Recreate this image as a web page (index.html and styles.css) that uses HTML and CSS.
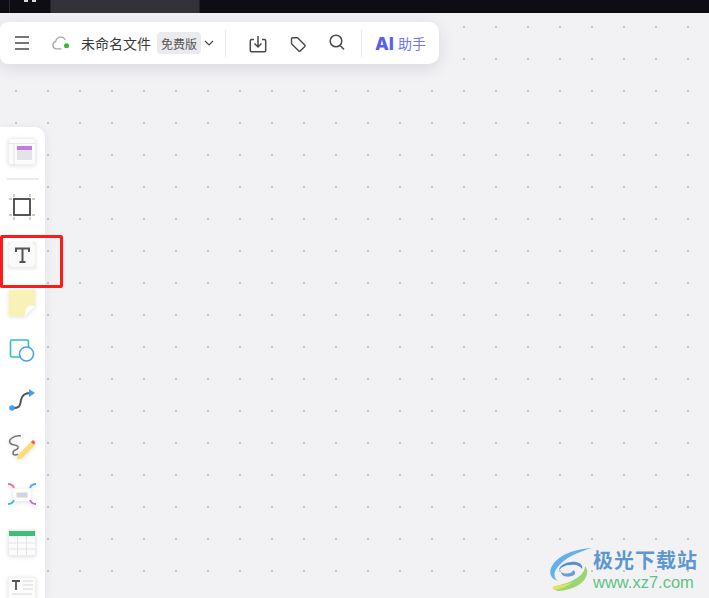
FILE: index.html
```html
<!DOCTYPE html>
<html lang="zh">
<head>
<meta charset="utf-8">
<title>未命名文件</title>
<link rel="stylesheet" href="styles.css">
</head>
<body>
<div class="titlebar">
  <div class="win-btn"><svg width="12" height="2" viewBox="0 0 12 2"><path d="M0 0h4v2H0zM8 0h4v2H8z" fill="#d8d8da"/></svg></div>
  <div class="tab"></div>
</div>
<div class="canvas">
  <div class="topbar">
    <svg class="ic-menu" width="16" height="14" viewBox="0 0 16 14"><path d="M1 1h14M1 7h14M1 13h14" stroke="#4a4a4a" stroke-width="1.300" fill="none"/></svg>
    <svg class="ic-cloud" width="18" height="14" viewBox="0 0 18 14"><path d="M9.500 12.800H4.500a3.600 3.600 0 0 1-.8-7.100A5.200 5.200 0 0 1 13.300 3.600" fill="none" stroke="#a6a6a6" stroke-width="1.300"/><circle cx="14.500" cy="9.800" r="2.500" fill="#36b82f"/></svg>
    <span class="filename">未命名文件</span>
    <span class="badge">免费版</span>
    <svg class="ic-chev" width="10" height="6" viewBox="0 0 10 6"><path d="M1 1l4 4 4-4" fill="none" stroke="#444" stroke-width="1.200"/></svg>
    <span class="sep sep-a"></span>
    <svg class="ic-save" width="18" height="18" viewBox="0 0 18 18"><path d="M5 4.500H2.500A1.200 1.200 0 0 0 1.300 5.700v9.800a1.200 1.200 0 0 0 1.200 1.200h13a1.200 1.200 0 0 0 1.200-1.200V5.700a1.200 1.200 0 0 0-1.200-1.200H13M9 1v10.500M5.500 8.500L9 12l3.500-3.500" fill="none" stroke="#4a4a4a" stroke-width="1.500"/></svg>
    <svg class="ic-tag" width="17" height="17" viewBox="0 0 17 17"><path d="M1.500 3v4.300a1 1 0 0 0 .3.700l7 7a1 1 0 0 0 1.400 0l4.600-4.600a1 1 0 0 0 0-1.400l-7-7a1 1 0 0 0-.7-.3H2.800A1.300 1.300 0 0 0 1.500 3z" fill="none" stroke="#4a4a4a" stroke-width="1.400"/></svg>
    <svg class="ic-search" width="16" height="17" viewBox="0 0 16 17"><circle cx="7" cy="7" r="5.800" fill="none" stroke="#4a4a4a" stroke-width="1.500"/><path d="M11.200 11.400L15 15.500" stroke="#4a4a4a" stroke-width="1.500"/></svg>
    <span class="sep sep-b"></span>
    <span class="ai">AI</span>
    <span class="ai-label">助手</span>
  </div>

  <div class="toolbar">
    <div class="tool tool-first">
      <svg class="soft" width="30" height="30" viewBox="0 0 30 30"><rect x="1.500" y="1.500" width="27" height="26" rx="2" fill="#fbfbfc" stroke="#efeff1"/><path d="M1.500 6.500h27M7 6.500v21" stroke="#e8e8ec"/><rect x="10" y="9" width="15" height="4" fill="#c679e3"/><rect x="10" y="13" width="15" height="10" fill="#e3e4e9"/></svg>
    </div>
    <div class="divider"></div>
    <div class="tool">
      <svg width="26" height="26" viewBox="0 0 26 26"><rect x="5" y="5" width="16" height="16" fill="#fff" stroke="#444" stroke-width="1.800"/><path d="M5 0v3M21 0v3M5 23v3M21 23v3M0 5h3M0 21h3M23 5h3M23 21h3" stroke="#b5b9bd" stroke-width="1.400"/></svg>
    </div>
    <div class="tool">
      <svg class="soft" width="30" height="28" viewBox="0 0 30 28"><rect x="2" y="2" width="26" height="24" fill="#fafafa"/><path d="M1 1h3v3H1zM26 1h3v3h-3zM1 24h3v3H1zM26 24h3v3h-3z" fill="#f0f0f1"/><path d="M9 11V7.500h13V11M15.500 7.500v13.500M12.500 21h6" fill="none" stroke="#555" stroke-width="2"/></svg>
    </div>
    <div class="tool">
      <svg class="soft" width="30" height="30" viewBox="0 0 30 30"><path d="M2 2h26v16L18 28H2z" fill="#f9f2b6"/><path d="M18 28c0-3 .5-8 3-9.500 2-.8 5-.5 7-.5z" fill="#fff"/></svg>
    </div>
    <div class="tool">
      <svg width="26" height="24" viewBox="0 0 26 24"><rect x="1.500" y="1" width="18" height="17" rx="1.500" fill="#fff" stroke="#2fc0b6" stroke-width="1.600"/><circle cx="17.500" cy="15" r="7" fill="#fff" stroke="#4c9ff0" stroke-width="1.600"/></svg>
    </div>
    <div class="tool">
      <svg width="28" height="26" viewBox="0 0 28 26"><path d="M4 22c9 0 8-3 9-8 1-5 4-7 9-7" fill="none" stroke="#555" stroke-width="2"/><circle cx="4" cy="22" r="2.800" fill="#459df5"/><path d="M21 3l6 4-6 4z" fill="#459df5"/></svg>
    </div>
    <div class="tool">
      <svg class="soft" width="30" height="28" viewBox="0 0 30 28"><path d="M14 3C8 2 1 6 3 10c2 3 9 1 8 5-1 3-5 1-5 5 0 3 4 2 5 1" fill="none" stroke="#777" stroke-width="1.600"/><path d="M11 22l14-14 3.500 3.500-14 14-4.500 1z" fill="#fbdc72"/><path d="M24 9l2-2 2.500 2.500-2 2z" fill="#f05a5a"/></svg>
    </div>
    <div class="tool">
      <svg class="soft" width="30" height="24" viewBox="0 0 30 24"><rect x="6" y="6" width="18" height="12" rx="1" fill="#fff"/><rect x="9.500" y="9.500" width="11" height="5" fill="#d4d5da"/><path d="M1 1c3 0 5 1 6 4" fill="none" stroke="#ef6fa6" stroke-width="1.800"/><path d="M29 1c-3 0-5 1-6 4" fill="none" stroke="#5ca8f2" stroke-width="1.800"/><path d="M1 21c3 0 5-1 6-4" fill="none" stroke="#35c2b8" stroke-width="1.800"/><path d="M29 21c-3 0-5-1-6-4" fill="none" stroke="#b76ee8" stroke-width="1.800"/></svg>
    </div>
    <div class="tool">
      <svg class="soft" width="28" height="26" viewBox="0 0 28 26"><rect x="0.500" y="0.500" width="27" height="25" rx="1.500" fill="#fbfbfb" stroke="#ececee"/><path d="M1 1h26v5H1z" fill="#43bb7c"/><path d="M1 13h26M1 19h26M9.500 6v19M18.500 6v19" stroke="#e4e4e6"/></svg>
    </div>
    <div class="tool tool-last">
      <svg class="soft" width="28" height="28" viewBox="0 0 28 28"><rect x="0.500" y="0.500" width="27" height="27" fill="#fcfcfc" stroke="#f1f1f2"/><path d="M4 4h8M8 4v9" stroke="#555" stroke-width="1.800"/><path d="M15 4h10M15 8h10M15 12h10M4 17h20M4 22h14" stroke="#e2e2e4" stroke-width="1.400"/></svg>
    </div>
  </div>

  <div class="marker"></div>

  <div class="watermark">
    <svg class="wm-logo" width="44" height="46" viewBox="0 0 44 46">
      <path d="M43 1C27 2 10 7 3 19c-4 7-1 13 6 15-4-3-5-8-1-13C15 11 29 5 43 1z" fill="#63b1ea"/>
      <path d="M10 23c1-6 10-9 17-8 5 1 7 4 6 7-2-3-6-5-11-4-6 0-9 2-12 5z" fill="#5b8fc9"/>
      <path d="M12 25c0 5 8 6 13 3 2-2 1-4-1-5 0 3-7 5-12 2z" fill="#6b9ed4"/>
      <path d="M9 44c14-1 27-7 29-17 1-4-1-7-2-8 0 9-11 16-29 20-3 2-2 4 2 5z" fill="#9ad670"/>
      <path d="M5 43c7-1 14-4 19-8-5 2-12 3-19 4-2 1-2 3 0 4z" fill="#e5e25e"/>
    </svg>
    <div class="wm-text">
      <div class="wm-cn">极光下载站</div>
      <div class="wm-url">www.xz7.com</div>
    </div>
  </div>
</div>
</body>
</html>
```
FILE: styles.css
```css
* { box-sizing: border-box; }
html, body { margin: 0; height: 100%; overflow: hidden; }
body {
  width: 709px;
  height: 598px;
  font-family: "Noto Sans CJK SC", "Liberation Sans", sans-serif;
  display: flex;
  flex-direction: column;
  background: #f2f2f5;
}
.titlebar {
  height: 13px;
  flex: none;
  background: #0f0d14;
  display: flex;
  padding-left: 9px;
}
.win-btn {
  width: 41px;
  border-left: 1px solid #2a2a2e;
  display: flex;
  justify-content: center;
  padding-right: 1px;
}
.win-btn svg { display: block; }
.tab { width: 150px; background: #333238; border-left: 1px solid #222; border-right: 1px solid #222; }
.canvas {
  position: relative;
  flex: 1;
  background-color: #f2f2f5;
  background-image: radial-gradient(circle at 1px 1px, #c6c7ca 1.300px, transparent 1.300px);
  background-size: 32px 32px;
  background-position: 15px 13px;
}
.topbar {
  position: absolute;
  left: 0;
  top: 9px;
  width: 439px;
  height: 42px;
  background: #fff;
  border-radius: 8px 10px 10px 8px;
  box-shadow: 0 4px 16px rgba(40, 40, 60, 0.12);
  display: flex;
  align-items: center;
  padding-left: 14px;
}
.ic-menu { flex: none; }
.ic-cloud { margin-left: 22px; flex: none; }
.filename { margin-left: 11px; font-size: 14px; color: #3a3a3a; white-space: nowrap; }
.badge {
  margin-left: 6px;
  height: 22px;
  width: 44px;
  flex: none;
  background: #ebebef;
  border-radius: 4px;
  font-size: 12px;
  color: #555;
  display: flex;
  align-items: center;
  justify-content: center;
  white-space: nowrap;
}
.ic-chev { margin-left: 3px; flex: none; }
.sep { width: 1px; height: 28px; background: #ececee; flex: none; }
.sep-a { margin-left: 11px; }
.ic-save { margin-left: 23px; flex: none; position: relative; top: 1px; }
.ic-tag { margin-left: 23px; flex: none; position: relative; top: 1px; }
.ic-search { margin-left: 22px; flex: none; position: relative; top: -1px; }
.sep-b { margin-left: 16px; }
.ai {
  margin-left: 13px;
  font-family: "Inter", "Liberation Sans", sans-serif;
  font-weight: 800;
  font-size: 18px;
  color: #5b5fef;
}
.ai-label { margin-left: 4px; font-size: 14px; color: #7276f0; white-space: nowrap; }
.toolbar {
  position: absolute;
  left: 0;
  top: 114px;
  width: 45px;
  bottom: 0;
  background: #fff;
  border-radius: 0 10px 0 0;
  box-shadow: 0 2px 12px rgba(40, 40, 60, 0.08);
  display: flex;
  flex-direction: column;
  align-items: center;
  overflow: hidden;
}
.tool {
  height: 48px;
  flex: none;
  width: 45px;
  display: flex;
  align-items: center;
  justify-content: center;
  padding-right: 1px;
}
.tool-first { height: 51px; padding-top: 4px; padding-bottom: 5px; }
.divider { width: 32px; height: 2px; background: #ececee; flex: none; margin-bottom: 3px; }
.tool-last { padding-top: 0; }
.soft { filter: drop-shadow(0 1px 2px rgba(0, 0, 0, 0.12)); }
.marker {
  position: absolute;
  left: 0;
  top: 222px;
  width: 63px;
  height: 53px;
  border: 3px solid #ff1a1a;
  border-radius: 2px;
}
.watermark {
  position: absolute;
  left: 549px;
  top: 534px;
  display: flex;
  align-items: flex-start;
}
.wm-logo { flex: none; filter: blur(0.4px); }
.wm-cn {
  font-size: 20px;
  font-weight: 700;
  line-height: 26px;
  color: #5d97d2;
  letter-spacing: 1px;
  white-space: nowrap;
}
.wm-url {
  font-family: "Liberation Sans", sans-serif;
  font-size: 16.500px;
  line-height: 18px;
  color: #5fc286;
  white-space: nowrap;
}
```
